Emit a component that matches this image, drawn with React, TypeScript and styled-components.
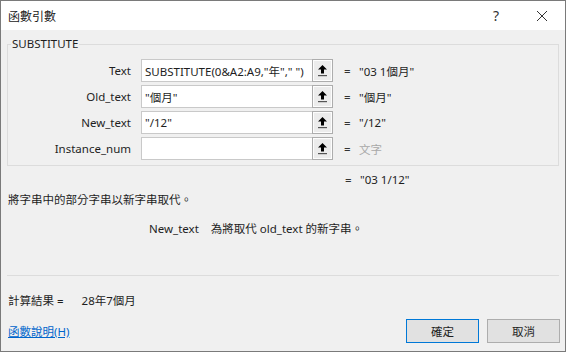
import React from "react";
import styled, { createGlobalStyle } from "styled-components";

const Global = createGlobalStyle`
  html, body { margin: 0; padding: 0; background: #ffffff; }
  body { font-family: "Noto Sans", "Noto Sans CJK TC", sans-serif; font-size: 11.5px; color: #1e1e1e; }
`;

const FONT = `"Noto Sans", "Noto Sans CJK TC", sans-serif`;

const Window = styled.div`
  box-sizing: border-box;
  width: 566px;
  height: 352px;
  border: 1px solid #7a7a7a;
  background: #f0f0f0;
  display: flex;
  flex-direction: column;
  font-family: ${FONT};
  font-size: 11.5px;
  overflow: hidden;
`;

const TitleBar = styled.div`
  height: 29px;
  background: #ffffff;
  display: flex;
  align-items: center;
  padding-left: 7px;
  flex: none;
`;

const Title = styled.div`
  flex: 1;
  font-size: 12px;
  color: #1a1a1a;
  font-family: "Noto Sans CJK TC", sans-serif;
  margin-top: -1px;
`;

const TitleButton = styled.div<{ $w: number }>`
  width: ${(p) => p.$w}px;
  height: 29px;
  display: flex;
  align-items: center;
  justify-content: center;
  color: #333;
  font-size: 14px;
`;

const Body = styled.div`
  flex: 1;
  display: flex;
  flex-direction: column;
  padding: 7px 6px 0 6px;
`;

const Group = styled.fieldset`
  margin: 0;
  padding: 8px 0 5px 0;
  border: 1px solid #dcdcdc;
  display: flex;
  flex-direction: column;
  gap: 3px;
  min-width: 0;
`;

const Legend = styled.legend`
  padding: 0 1px;
  margin-left: 3px;
  font-size: 11.5px;
  color: #1e1e1e;
  line-height: 14px;
`;

const ArgRow = styled.div`
  display: grid;
  grid-template-columns: 133px 171px 21px 26px 1fr;
  align-items: center;
  height: 23px;
`;

const ArgLabel = styled.div`
  text-align: right;
  padding-right: 10px;
  color: #1e1e1e;
  white-space: nowrap;
`;

const InputBox = styled.div`
  box-sizing: border-box;
  height: 23px;
  border: 1px solid #c9c9c9;
  border-right: none;
  background: #fff;
  display: flex;
  align-items: center;
  padding-left: 3px;
  white-space: nowrap;
  overflow: hidden;
  font-family: ${FONT};
`;

const RefButton = styled.div`
  box-sizing: border-box;
  height: 23px;
  width: 21px;
  border: 1px solid #adadad;
  box-shadow: inset 0 0 0 1px #fdfdfd;
  background: #ececec;
  display: flex;
  align-items: center;
  justify-content: center;
`;

const Equals = styled.div`
  padding-left: 11px;
  color: #333;
`;

const Value = styled.div<{ $muted?: boolean }>`
  color: ${(p) => (p.$muted ? "#a8a8a8" : "#1e1e1e")};
  white-space: nowrap;
`;

const ResultRow = styled.div`
  display: grid;
  grid-template-columns: 326px 26px 1fr;
  height: 20px;
  align-items: center;
  margin-top: 3px;
  padding-left: 1px;
`;

const Desc = styled.div`
  padding-left: 1px;
  height: 20px;
  display: flex;
  align-items: center;
  color: #1e1e1e;
`;

const ArgDesc = styled.div`
  padding-left: 142px;
  height: 20px;
  margin-top: 9px;
  display: flex;
  align-items: center;
  gap: 12px;
  color: #1e1e1e;
  white-space: nowrap;
`;

const Spacer = styled.div`
  flex: 1;
`;

const Separator = styled.div`
  height: 1px;
  background: #dcdcdc;
`;

const CalcRow = styled.div`
  height: 20px;
  margin-top: 14px;
  display: flex;
  align-items: center;
  gap: 18px;
  padding-left: 1px;
`;

const Footer = styled.div`
  display: flex;
  align-items: center;
  height: 24px;
  margin-top: 9px;
  margin-bottom: 8px;
  padding-left: 1px;
`;

const HelpLink = styled.a`
  color: #0066cc;
  text-decoration: underline;
  flex: 1;
  cursor: pointer;
`;

const Button = styled.button<{ $primary?: boolean }>`
  box-sizing: border-box;
  width: 73px;
  height: 24px;
  margin-left: 8px;
  border: 1px solid ${(p) => (p.$primary ? "#0078d7" : "#adadad")};
  background: #e1e1e1;
  font-family: ${FONT};
  font-size: 11.5px;
  color: #1e1e1e;
  padding: 0;
  &:last-child { margin-right: -1px; }
`;

const UploadIcon = () => (
  <svg width="11" height="13" viewBox="0 0 11 13">
    <path d="M5.5 1 L10 5.5 L7 5.5 L7 9.5 L4 9.5 L4 5.5 L1 5.5 Z" fill="#000" />
    <rect x="1" y="11" width="9" height="1.2" fill="#555" />
  </svg>
);

const CloseIcon = () => (
  <svg width="12" height="12" viewBox="0 0 12 12">
    <path d="M1 1 L11 11 M11 1 L1 11" stroke="#333" strokeWidth="1" />
  </svg>
);

type Arg = { label: string; input: string; value: string; muted?: boolean };

const args: Arg[] = [
  { label: "Text", input: 'SUBSTITUTE(0&A2:A9,"年"," ")', value: '"03 1個月"' },
  { label: "Old_text", input: '"個月"', value: '"個月"' },
  { label: "New_text", input: '"/12"', value: '"/12"' },
  { label: "Instance_num", input: "", value: "文字", muted: true },
];

export default function App() {
  return (
    <>
      <Global />
      <Window>
        <TitleBar>
          <Title>函數引數</Title>
          <TitleButton $w={46}>?</TitleButton>
          <TitleButton $w={46}>
            <CloseIcon />
          </TitleButton>
        </TitleBar>
        <Body>
          <Group>
            <Legend>SUBSTITUTE</Legend>
            {args.map((a) => (
              <ArgRow key={a.label}>
                <ArgLabel>{a.label}</ArgLabel>
                <InputBox>{a.input}</InputBox>
                <RefButton>
                  <UploadIcon />
                </RefButton>
                <Equals>=</Equals>
                <Value $muted={a.muted}>{a.value}</Value>
              </ArgRow>
            ))}
          </Group>
          <ResultRow>
            <span />
            <Equals>=</Equals>
            <Value>"03 1/12"</Value>
          </ResultRow>
          <Desc>將字串中的部分字串以新字串取代。</Desc>
          <ArgDesc>
            <span>New_text</span>
            <span>為將取代 old_text 的新字串。</span>
          </ArgDesc>
          <Spacer />
          <Separator />
          <CalcRow>
            <span>計算結果 =</span>
            <span>28年7個月</span>
          </CalcRow>
          <Footer>
            <HelpLink>函數說明(H)</HelpLink>
            <Button $primary>確定</Button>
            <Button>取消</Button>
          </Footer>
        </Body>
      </Window>
    </>
  );
}
